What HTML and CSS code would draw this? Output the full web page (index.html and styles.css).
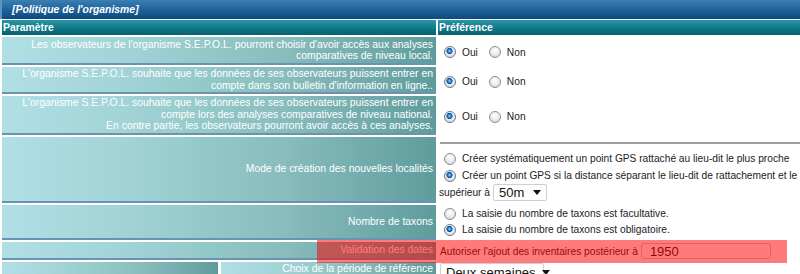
FILE: index.html
```html
<!DOCTYPE html>
<html lang="fr">
<head>
<meta charset="utf-8">
<title>Politique de l'organisme</title>
<link rel="stylesheet" href="styles.css">
</head>
<body>
<div class="panel">
  <div class="title">[Politique de l'organisme]</div>
  <div class="grid">
    <div class="head">Paramètre</div>
    <div class="head">Préférence</div>

    <div class="lcell"><div>Les observateurs de l'organisme S.E.P.O.L. pourront choisir d'avoir accès aux analyses<br>comparatives de niveau local.</div></div>
    <div class="rcell row-opts">
      <label class="opt"><input type="radio" name="r1" checked>Oui</label>
      <label class="opt"><input type="radio" name="r1">Non</label>
    </div>

    <div class="lcell"><div>L'organisme S.E.P.O.L. souhaite que les données de ses observateurs puissent entrer en<br>compte dans son bulletin d'information en ligne..</div></div>
    <div class="rcell row-opts">
      <label class="opt"><input type="radio" name="r2" checked>Oui</label>
      <label class="opt"><input type="radio" name="r2">Non</label>
    </div>

    <div class="lcell"><div>L'organisme S.E.P.O.L. souhaite que les données de ses observateurs puissent entrer en<br>compte lors des analyses comparatives de niveau national.<br>En contre partie, les observateurs pourront avoir accès à ces analyses.</div></div>
    <div class="rcell row-opts">
      <label class="opt"><input type="radio" name="r3" checked>Oui</label>
      <label class="opt"><input type="radio" name="r3">Non</label>
    </div>

    <div class="lcell"><div>Mode de création des nouvelles localités</div></div>
    <div class="rcell stack">
      <div class="rule"></div>
      <div class="line"><input type="radio" name="r4">Créer systématiquement un point GPS rattaché au lieu-dit le plus proche</div>
      <div class="line"><input type="radio" name="r4" checked>Créer un point GPS si la distance séparant le lieu-dit de rattachement et le</div>
      <div class="line">supérieur à <span class="select sel-50"><span>50m</span><svg class="arrow" width="8" height="5" viewBox="0 0 8 5"><path d="M0 0H8L4 5Z" fill="#111"/></svg></span></div>
    </div>

    <div class="lcell"><div>Nombre de taxons</div></div>
    <div class="rcell stack taxa">
      <div class="line"><input type="radio" name="r5">La saisie du nombre de taxons est facultative.</div>
      <div class="line"><input type="radio" name="r5" checked>La saisie du nombre de taxons est obligatoire.</div>
    </div>

    <div class="lcell"><div>Validation des dates</div></div>
    <div class="rcell row-date">Autoriser l'ajout des inventaires postérieur à <input class="year" type="text" value="1950"></div>

    <div class="split">
      <div class="lcell sub"></div>
      <div class="lcell sub top"><div>Choix de la période de référence</div></div>
    </div>
    <div class="rcell row-period"><span class="select sel-period"><span>Deux semaines</span><svg class="arrow" width="8" height="5" viewBox="0 0 8 5"><path d="M0 0H8L4 5Z" fill="#111"/></svg></span></div>
  </div>
  <div class="highlight"></div>
</div>
</body>
</html>
```

FILE: styles.css
```css
html, body {
  margin: 0;
  padding: 0;
  background: #ffffff;
}

body {
  font-family: "Liberation Sans", Arial, sans-serif;
  font-size: 10.4px;
  color: #222222;
  overflow: hidden;
}

.panel {
  position: relative;
  width: 800px;
}

.title {
  height: 19px;
  box-sizing: border-box;
  border-left: 2px solid #5b93c4;
  background: linear-gradient(#3a80b3, #1d6097 55%, #0b4a80);
  color: #ffffff;
  font-weight: bold;
  font-style: italic;
  padding-left: 10px;
  line-height: 19px;
}

.grid {
  display: grid;
  grid-template-columns: 434px 362px;
  grid-template-rows: 15px 28px 27px 39px 66px 35px 18px 20px;
  column-gap: 2px;
  row-gap: 2px;
  margin-top: 1px;
  padding-left: 2px;
}

.head {
  background: linear-gradient(#2a98a8, #0f7484 60%, #08606e);
  color: #ffffff;
  font-weight: bold;
  line-height: 15px;
  padding-left: 1px;
}

.lcell {
  box-sizing: border-box;
  background: linear-gradient(to right, #b0e0e5 0%, #a2d3d7 28%, #94c9c9 46%, #88bcbd 65%, #74acad 83%, #5e9c9c 100%);
  border-bottom: 2px solid #6a93b3;
  color: #ffffff;
  text-align: right;
  display: flex;
  align-items: center;
  justify-content: flex-end;
  padding-right: 3px;
  line-height: 11.5px;
  white-space: nowrap;
}

.split {
  display: flex;
  gap: 3px;
}

.split .sub {
  flex: 1;
}

.split .top {
  align-items: flex-start;
  padding-top: 1px;
}

.rcell {
  box-sizing: border-box;
  padding-left: 1px;
  font-size: 10.2px;
}

.row-opts {
  display: flex;
  align-items: center;
  padding-top: 2px;
}

.opt {
  display: inline-flex;
  align-items: center;
  margin-right: 6px;
}

input[type="radio"] {
  -webkit-appearance: none;
  appearance: none;
  width: 12px;
  height: 12px;
  margin: 0 6px 0 5px;
  border: 1px solid #8d8f90;
  border-radius: 50%;
  box-sizing: border-box;
  background: radial-gradient(circle at 50% 35%, #ffffff 0, #eeeeee 45%, #cfcfcf 100%);
  vertical-align: middle;
  flex: none;
}

input[type="radio"]:checked {
  border-color: #6c7a86;
  background:
    radial-gradient(circle at 45% 40%, #a6dcff 0, #2b8de0 1.4px, #0b4a96 2.8px, rgba(11, 74, 150, 0) 3.4px),
    radial-gradient(circle at 50% 35%, #ffffff 0, #eeeeee 45%, #cfcfcf 100%);
}

.stack {
  padding-top: 5px;
}

.rule {
  height: 2px;
  background: #9e9e9e;
  margin: 0 0 6px 1px;
}

.line {
  height: 17px;
  line-height: 17px;
  display: flex;
  align-items: center;
  white-space: nowrap;
}

.taxa {
  padding-top: 1px;
}

.taxa .line {
  height: 16px;
  line-height: 16px;
}

.select {
  display: inline-flex;
  align-items: center;
  justify-content: space-between;
  box-sizing: border-box;
  height: 17px;
  border: 1px solid #cfcfcf;
  border-radius: 2px;
  background: #ffffff;
  font-size: 13px;
  color: #111111;
  padding: 0 5px 0 5px;
  margin-left: 3px;
  white-space: nowrap;
}

.sel-50 {
  width: 54px;
}

.sel-period {
  width: 104px;
  height: 18px;
  margin-left: 1px;
}

.arrow {
  flex: none;
  margin-left: 6px;
}

.row-date {
  display: flex;
  align-items: center;
  padding-left: 2px;
  white-space: nowrap;
}

.year {
  box-sizing: border-box;
  width: 130px;
  height: 16px;
  margin-left: 3px;
  border: 1px solid #c8c8c8;
  border-radius: 3px;
  padding: 0 8px;
  font-family: "Liberation Sans", Arial, sans-serif;
  font-size: 13px;
  color: #111111;
  background: #ffffff;
}

.row-period {
  display: flex;
  align-items: flex-start;
  padding-top: 1px;
}

.highlight {
  position: absolute;
  left: 317px;
  top: 240px;
  width: 470px;
  height: 23px;
  background: rgba(255, 0, 0, 0.52);
  pointer-events: none;
}
```
